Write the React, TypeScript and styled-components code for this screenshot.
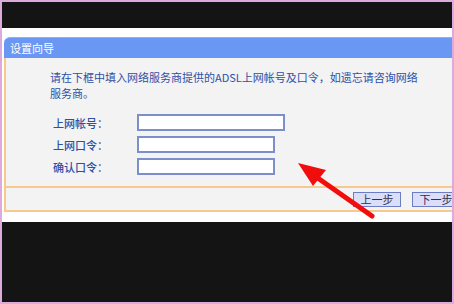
import React from 'react'
import styled, { createGlobalStyle } from 'styled-components';

const GlobalStyle = createGlobalStyle`
    html, body {
        margin: 0;
        padding: 0;
        background: #ffffff;
    }
    body {
        font-family: "Noto Sans CJK SC", "Liberation Sans", sans-serif;
    }
`;

const fields = ["上网帐号：", "上网口令：", "确认口令："];
const fieldWidths = [148, 138, 138];

export default function App() {
    return (
        <Frame>
            <GlobalStyle />
            <Band />
            <Screen>
                <Panel>
                    <TitleBar>设置向导</TitleBar>
                    <Body>
                        <FormSection>
                            <Intro>
                                请在下框中填入网络服务商提供的ADSL上网帐号及口令，如遗忘请咨询网络<br />
                                服务商。
                            </Intro>
                            <FieldGrid>
                                {fields.map((label, i) => (
                                    <React.Fragment key={label}>
                                        <Label>{label}</Label>
                                        <Input type={i === 0 ? "text" : "password"} style={{ width: fieldWidths[i] }} />
                                    </React.Fragment>
                                ))}
                            </FieldGrid>
                        </FormSection>
                        <Footer>
                            <StepButton>上一步</StepButton>
                            <StepButton>下一步</StepButton>
                        </Footer>
                    </Body>
                </Panel>
            </Screen>
            <Band $grow />
            <Arrow viewBox="0 0 454 304" width="454" height="304">
                <line x1="372" y1="216" x2="312" y2="174" stroke="#f20d0d" strokeWidth="5" strokeLinecap="round" />
                <polygon points="298,163 326,170 313,186" fill="#f20d0d" />
            </Arrow>
        </Frame>
    )
}

const Frame = styled.div`
    position: relative;
    width: 454px;
    height: 304px;
    box-sizing: border-box;
    border: 2px solid #dcaadc;
    display: flex;
    flex-direction: column;
    overflow: hidden;
    background: #ffffff;
`;

const Band = styled.div<{ $grow?: boolean }>`
    background: #141414;
    height: 26px;
    flex: ${p => (p.$grow ? "1" : "none")};
`;

const Screen = styled.div`
    height: 194px;
    box-sizing: border-box;
    padding: 9px 0 0 2px;
    display: flex;
    align-items: flex-start;
    background: #ffffff;
`;

const Panel = styled.div`
    width: 466px;
    flex-shrink: 0;
    display: flex;
    flex-direction: column;
`;

const TitleBar = styled.div`
    height: 21px;
    background: #6b97f4;
    border-top: 1px solid #8fb0f8;
    box-sizing: border-box;
    border-radius: 6px 6px 0 0;
    color: #ffffff;
    font-size: 11px;
    line-height: 20px;
    padding-left: 6px;
`;

const Body = styled.div`
    background: #f3f3f3;
    border-left: 2px solid #f8c98f;
    border-bottom: 2px solid #f8c98f;
`;

const FormSection = styled.div`
    padding: 11px 0 11px 44px;
    border-bottom: 2px solid #f8c98f;
`;

const Intro = styled.div`
    color: #2d4fa6;
    font-size: 11px;
    line-height: 16px;
    white-space: nowrap;
`;

const FieldGrid = styled.div`
    display: grid;
    grid-template-columns: 84px auto;
    row-gap: 5px;
    align-items: center;
    justify-items: start;
    margin: 13px 0 0 3px;
`;

const Label = styled.span`
    color: #2d4fa6;
    font-size: 11px;
    font-weight: 500;
`;

const Input = styled.input`
    height: 17px;
    box-sizing: border-box;
    border: 2px solid #7d8fcb;
    background: #ffffff;
    padding: 0 3px;
    outline: none;
`;

const Footer = styled.div`
    height: 22px;
    display: flex;
    justify-content: flex-end;
    align-items: center;
    gap: 11px;
    padding-right: 10px;
`;

const StepButton = styled.button`
    width: 48px;
    height: 15px;
    padding: 0;
    box-sizing: border-box;
    border: 1px solid #6d7dc4;
    background: #dadef8;
    color: #303050;
    font-family: "Noto Sans CJK SC", sans-serif;
    font-size: 11px;
    line-height: 13px;
`;

const Arrow = styled.svg`
    position: absolute;
    left: -2px;
    top: -2px;
    pointer-events: none;
`;
